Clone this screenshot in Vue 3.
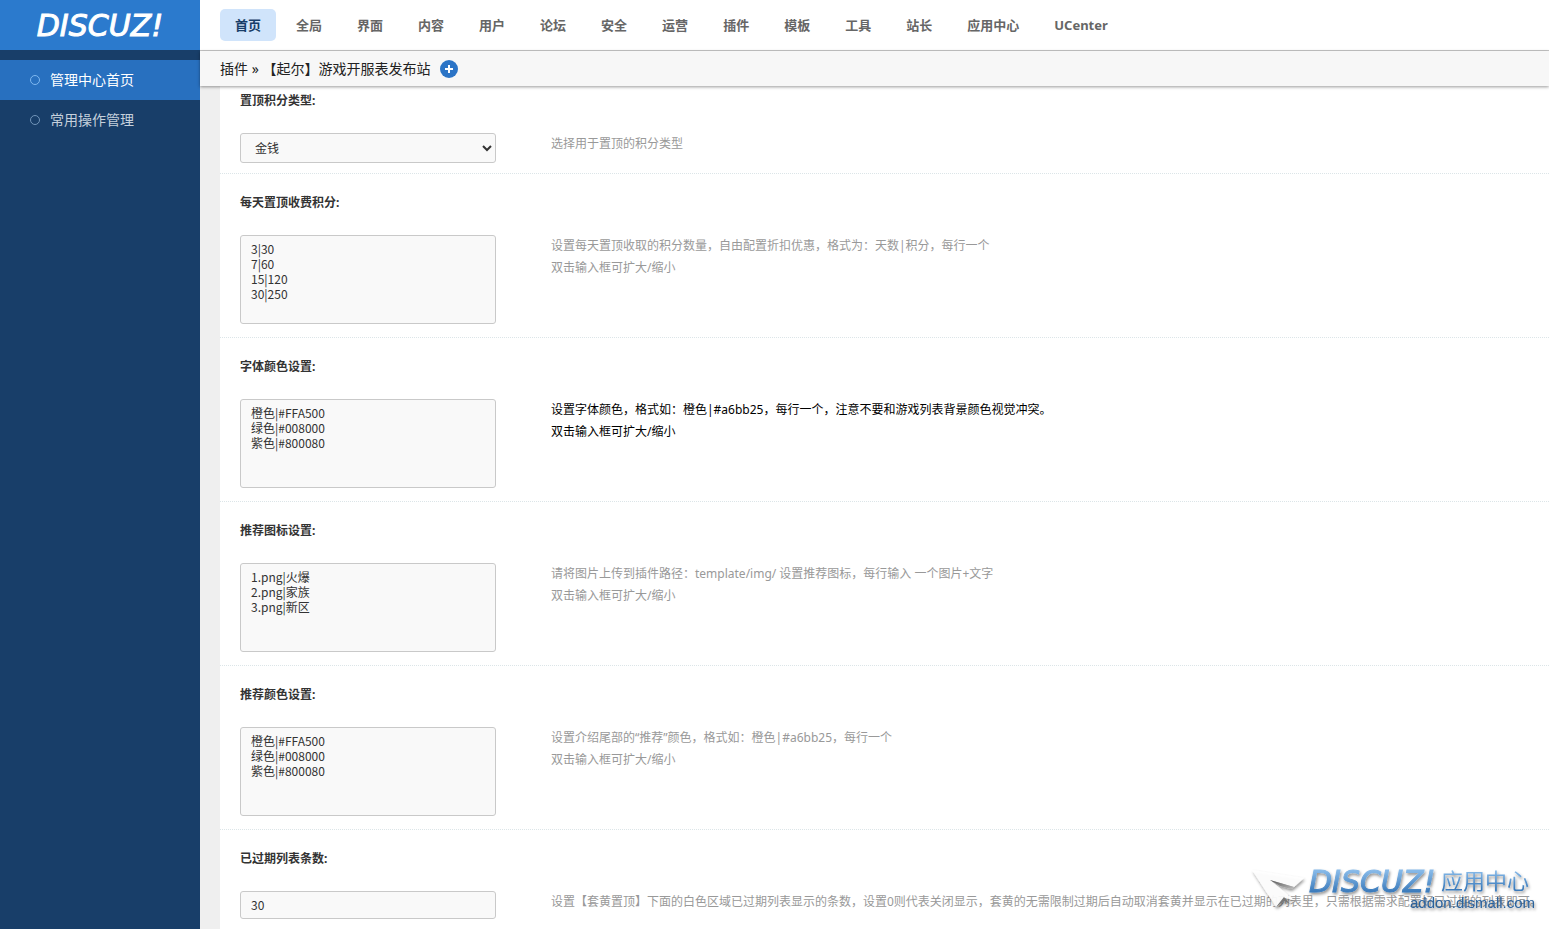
<script setup>
import { ref } from 'vue'

const topMenu = ['首页', '全局', '界面', '内容', '用户', '论坛', '安全', '运营', '插件', '模板', '工具', '站长', '应用中心', 'UCenter']
const sideMenu = ['管理中心首页', '常用操作管理']
const resizeTip = '双击输入框可扩大/缩小'

const settings = ref([
  { id: 'credit-type', type: 'select', label: '置顶积分类型:', value: '金钱', help: ['选择用于置顶的积分类型'] },
  { id: 'credit-price', type: 'textarea', label: '每天置顶收费积分:', value: '3|30\n7|60\n15|120\n30|250', help: ['设置每天置顶收取的积分数量，自由配置折扣优惠，格式为：天数|积分，每行一个', resizeTip] },
  { id: 'font-color', type: 'textarea', label: '字体颜色设置:', value: '橙色|#FFA500\n绿色|#008000\n紫色|#800080', help: ['设置字体颜色，格式如：橙色|#a6bb25，每行一个，注意不要和游戏列表背景颜色视觉冲突。', resizeTip], active: true },
  { id: 'hot-icon', type: 'textarea', label: '推荐图标设置:', value: '1.png|火爆\n2.png|家族\n3.png|新区', help: ['请将图片上传到插件路径：template/img/ 设置推荐图标，每行输入 一个图片+文字', resizeTip] },
  { id: 'hot-color', type: 'textarea', label: '推荐颜色设置:', value: '橙色|#FFA500\n绿色|#008000\n紫色|#800080', help: ['设置介绍尾部的“推荐”颜色，格式如：橙色|#a6bb25，每行一个', resizeTip] },
  { id: 'expired-count', type: 'text', label: '已过期列表条数:', value: '30', help: ['设置【套黄置顶】下面的白色区域已过期列表显示的条数，设置0则代表关闭显示，套黄的无需限制过期后自动取消套黄并显示在已过期的列表里，只需根据需求配置好已过期的列表即可。'] },
])
</script>

<template>
  <div class="admin">
    <aside class="sidebar">
      <a class="logo" href="#">DISCUZ!</a>
      <nav class="side-nav">
        <a v-for="(item, i) in sideMenu" :key="item" href="#" :class="{ current: i === 0 }">
          <span class="ring"></span><span class="item-text">{{ item }}</span>
        </a>
      </nav>
    </aside>

    <div class="page">
      <nav class="top-nav">
        <a v-for="(item, i) in topMenu" :key="item" href="#" :class="{ current: i === 0 }">{{ item }}</a>
      </nav>
      <div class="crumbs">
        <span class="item-text">插件 » 【起尔】游戏开服表发布站</span>
        <button type="button" class="add" aria-label="添加">
          <svg width="18" height="18" viewBox="0 0 18 18">
            <circle cx="9" cy="9" r="9" fill="#2b74c6" />
            <path d="M9 5v8M5 9h8" stroke="#fff" stroke-width="2" />
          </svg>
        </button>
      </div>

      <form class="settings" @submit.prevent>
        <section v-for="s in settings" :key="s.id" class="row">
          <label :for="s.id">{{ s.label }}</label>
          <div class="cols">
            <div class="field">
              <select v-if="s.type === 'select'" :id="s.id" v-model="s.value">
                <option>金钱</option>
              </select>
              <textarea v-else-if="s.type === 'textarea'" :id="s.id" v-model="s.value"></textarea>
              <input v-else :id="s.id" v-model="s.value" type="text">
            </div>
            <div class="help" :class="{ active: s.active }">
              <p v-for="line in s.help" :key="line">{{ line }}</p>
            </div>
          </div>
        </section>
      </form>
    </div>

    <svg class="watermark" width="319" height="79" viewBox="0 0 319 79">
      <defs>
        <linearGradient id="brand" x1="0" y1="0" x2="0" y2="1">
          <stop offset="0.2" stop-color="#86b9e8" />
          <stop offset="0.8" stop-color="#3a7abb" />
        </linearGradient>
        <linearGradient id="fold" x1="0" y1="0" x2="1" y2="1">
          <stop offset="0" stop-color="#555" />
          <stop offset="1" stop-color="#bbb" />
        </linearGradient>
        <filter id="drop" x="-10%" y="-20%" width="120%" height="150%">
          <feDropShadow dx="1" dy="2" stdDeviation="1.5" flood-color="#000" flood-opacity="0.45" />
        </filter>
      </defs>
      <g filter="url(#drop)">
        <path d="M22 20 74 28 64 37 40 30 64 50 55 48 46 57Z" fill="#fff" fill-opacity="0.9" />
        <path d="M40 30 64 37 61 39 50 36Z" fill="url(#fold)" />
        <path d="M46 57 54 47 60 54 54 51Z" fill="#777" />
        <text x="79" y="42" class="wm-brand">DISCUZ!</text>
        <text x="211" y="39" class="wm-name">应用中心</text>
        <text x="180" y="58" class="wm-url">addon.dismall.com</text>
      </g>
    </svg>
  </div>
</template>

<style>
body {
  background: #fff;
}
</style>

<style scoped>
.admin {
  display: flex;
  height: 100vh;
  overflow: hidden;
  font-family: "Noto Sans", "Noto Sans CJK SC", sans-serif;
  font-size: 12px;
  color: #333;
}
a {
  color: inherit;
  text-decoration: none;
}
.sidebar {
  flex: 0 0 200px;
  background: #183e69;
}
.logo {
  display: flex;
  align-items: center;
  justify-content: center;
  height: 50px;
  background: #2b7acd;
  color: #fff;
  font-family: "DejaVu Sans", sans-serif;
  font-size: 30px;
  font-style: italic;
  -webkit-text-stroke: 1px #fff;
}
.side-nav {
  padding-top: 10px;
}
.side-nav a {
  display: flex;
  align-items: center;
  gap: 10px;
  height: 40px;
  padding-left: 30px;
  font-size: 14px;
  color: #c5d0dc;
}
.side-nav a.current {
  background: #2870bf;
  color: #fff;
}
.item-text {
  padding-bottom: 2px;
}
.ring {
  box-sizing: border-box;
  width: 10px;
  height: 10px;
  border: 1px solid #7295b9;
  border-radius: 50%;
}
.current .ring {
  border-color: #7fb8f0;
}
.page {
  flex: 1;
  min-width: 0;
  display: flex;
  flex-direction: column;
  background: #efefef;
}
.top-nav {
  display: flex;
  align-items: center;
  gap: 5px;
  height: 50px;
  flex: none;
  padding-left: 20px;
  border-bottom: 1px solid #c8c8c8;
  background: #fff;
}
.top-nav a {
  padding: 0 15px;
  border-radius: 5px;
  line-height: 32px;
  font-size: 13px;
  font-weight: 700;
  color: #666;
  white-space: nowrap;
}
.top-nav a.current {
  background: #d0e4fb;
  color: #183e69;
}
.crumbs {
  position: relative;
  z-index: 1;
  flex: none;
  display: flex;
  align-items: center;
  gap: 10px;
  height: 35px;
  padding-left: 20px;
  background: #f7f7f7;
  box-shadow: 0 1px 3px rgba(0, 0, 0, 0.4);
  font-size: 14px;
  color: #222;
}
.add {
  display: flex;
  padding: 0;
  border: 0;
  background: none;
}
.settings {
  flex: 1;
  min-height: 0;
  margin-left: 20px;
  overflow: hidden;
  background: #fff;
}
.row {
  padding: 18px 0 13px 20px;
  border-bottom: 1px dotted #dce5e8;
}
.row:first-child {
  padding-top: 4px;
  padding-bottom: 10px;
}
.row > label {
  display: block;
  margin-bottom: 21px;
  font-weight: 700;
  line-height: 22px;
}
.cols {
  display: flex;
  gap: 55px;
}
.field {
  flex: 0 0 256px;
}
.field > * {
  display: block;
  box-sizing: border-box;
  width: 100%;
  margin: 0;
  border: 1px solid #c9c9c9;
  border-radius: 3px;
  background: #f9f9f9;
  color: #333;
  font-family: "Noto Sans CJK SC", sans-serif;
  font-size: 12px;
}
.field select {
  height: 30px;
  padding: 0 0 2px 10px;
}
.field textarea {
  height: 89px;
  padding: 5px 10px;
  line-height: 15px;
  resize: none;
}
.field input {
  height: 28px;
  padding: 0 10px 2px;
}
.help {
  flex: 1;
  min-width: 0;
  color: #999;
  line-height: 22px;
}
.help.active {
  color: #000;
}
.help p {
  margin: 0;
}
.watermark {
  position: fixed;
  right: 0;
  bottom: 0;
  pointer-events: none;
}
.wm-brand {
  fill: url(#brand);
  stroke: url(#brand);
  stroke-width: 1px;
  font-family: "DejaVu Sans", sans-serif;
  font-size: 30px;
  font-style: italic;
}
.wm-name {
  fill: url(#brand);
  font-size: 22px;
}
.wm-url {
  fill: #2b629c;
  font-family: "Liberation Sans", sans-serif;
  font-size: 15px;
}
</style>
